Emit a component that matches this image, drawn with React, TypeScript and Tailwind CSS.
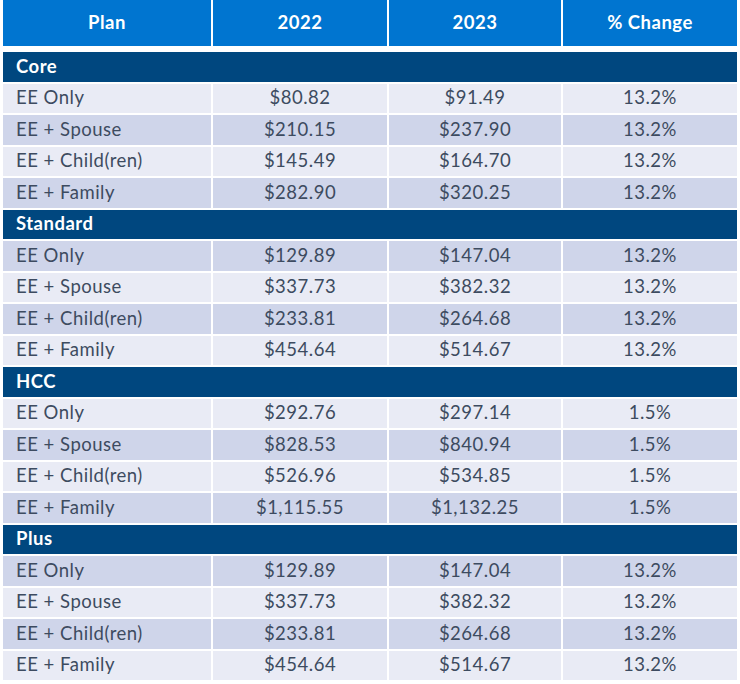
const sections = [
  {
    name: "Core",
    rows: [
      ["EE Only", "$80.82", "$91.49", "13.2%"],
      ["EE + Spouse", "$210.15", "$237.90", "13.2%"],
      ["EE + Child(ren)", "$145.49", "$164.70", "13.2%"],
      ["EE + Family", "$282.90", "$320.25", "13.2%"],
    ],
  },
  {
    name: "Standard",
    rows: [
      ["EE Only", "$129.89", "$147.04", "13.2%"],
      ["EE + Spouse", "$337.73", "$382.32", "13.2%"],
      ["EE + Child(ren)", "$233.81", "$264.68", "13.2%"],
      ["EE + Family", "$454.64", "$514.67", "13.2%"],
    ],
  },
  {
    name: "HCC",
    rows: [
      ["EE Only", "$292.76", "$297.14", "1.5%"],
      ["EE + Spouse", "$828.53", "$840.94", "1.5%"],
      ["EE + Child(ren)", "$526.96", "$534.85", "1.5%"],
      ["EE + Family", "$1,115.55", "$1,132.25", "1.5%"],
    ],
  },
  {
    name: "Plus",
    rows: [
      ["EE Only", "$129.89", "$147.04", "13.2%"],
      ["EE + Spouse", "$337.73", "$382.32", "13.2%"],
      ["EE + Child(ren)", "$233.81", "$264.68", "13.2%"],
      ["EE + Family", "$454.64", "$514.67", "13.2%"],
    ],
  },
];

const cols = "grid grid-cols-[208px_174px_172px_174px] gap-x-[2px]";

export default function App() {
  // row index counts the header and section rows too, so banding flips per section
  let idx = 1;
  return (
    <div className="w-[740px] h-[684px] bg-white pl-[3px] font-['Lato','Open_Sans',sans-serif] text-[18.5px] tracking-[0.5px] text-[#3d4b60]">
      {/* Header */}
      <div className={`${cols} h-[46px] mb-[6px]`}>
        {["Plan", "2022", "2023", "% Change"].map((h) => (
          <div key={h} className="bg-[#0075d0] text-white font-bold flex items-center justify-center">
            {h}
          </div>
        ))}
      </div>

      <div className="flex flex-col gap-y-[2px] w-[734px]">
        {sections.map((s) => {
          idx++;
          return (
            <div key={s.name} className="contents">
              <div className="h-[29.5px] bg-[#00477f] text-white font-bold flex items-center pl-[13px]">
                {s.name}
              </div>
              {s.rows.map((r) => {
                const light = idx % 2 === 0;
                idx++;
                const bg = light ? "bg-[#e9ebf5]" : "bg-[#cfd5ea]";
                return (
                  <div key={s.name + r[0]} className={`${cols} h-[29.5px]`}>
                    <div className={`${bg} flex items-center pl-[13px]`}>{r[0]}</div>
                    <div className={`${bg} flex items-center justify-center`}>{r[1]}</div>
                    <div className={`${bg} flex items-center justify-center`}>{r[2]}</div>
                    <div className={`${bg} flex items-center justify-center`}>{r[3]}</div>
                  </div>
                );
              })}
            </div>
          );
        })}
      </div>
    </div>
  );
}
